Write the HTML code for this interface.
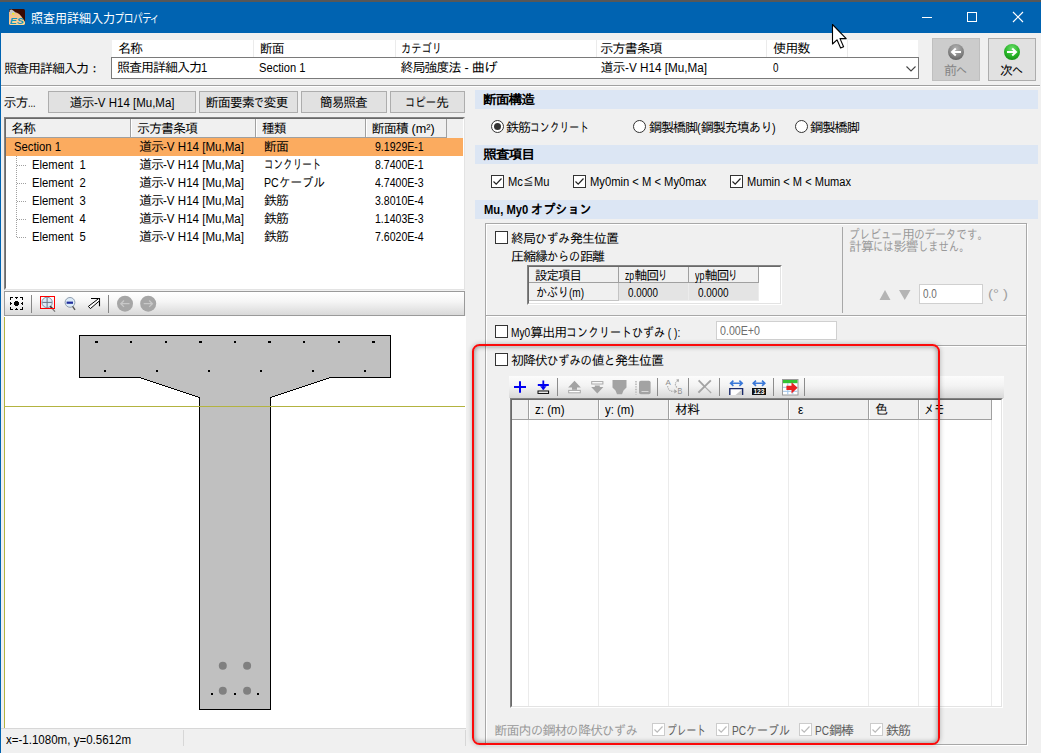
<!DOCTYPE html>
<html lang="ja"><head><meta charset="utf-8"><title>照査用詳細入力プロパティ</title>
<style>
*{box-sizing:border-box;margin:0;padding:0}
html,body{width:1041px;height:753px;overflow:hidden;background:#f0f0f0}
body{position:relative;font:12px/14px "Liberation Sans","IPAGothic",sans-serif;color:#000}
.a{position:absolute}
.t{position:absolute;white-space:pre;height:14px;line-height:14px}
.s{display:inline-block;transform-origin:0 50%}
.k{font-size:13px;letter-spacing:-1px}
.h{font-size:13px}
.btn{position:absolute;background:#e1e1e1;border:1px solid #adadad}
.band{position:absolute;left:475px;width:563px;height:19px;background:#dce6f4}
.cb{position:absolute;width:13px;height:13px;background:#fff;border:1px solid #333}
.cb.d{border-color:#ccc;background:#fff}
.rd{position:absolute;width:13px;height:13px;background:#fff;border:1px solid #333;border-radius:50%}
.vs{position:absolute;width:1px;background:#ebebeb}
</style></head><body>
<!-- window chrome -->
<div class="a" style="left:0;top:0;width:1041px;height:2px;background:#575757"></div>
<div class="a" style="left:0;top:2px;width:1041px;height:31px;background:#0063b1"></div>
<div class="a" style="left:0;top:33px;width:1px;height:720px;background:#0063b1"></div>
<svg class="a" style="left:9px;top:9px" width="16" height="16" viewBox="0 0 16 16"><defs><linearGradient id="ig" x1="0" y1="0" x2="0" y2="1"><stop offset="0" stop-color="#f0b888"/><stop offset="1" stop-color="#ffd898"/></linearGradient><clipPath id="ic"><rect width="16" height="16" rx="1.6"/></clipPath></defs><g clip-path="url(#ic)"><rect width="16" height="16" fill="#3a0a02"/><path d="M0 3 Q8 2 12 7 Q14.5 10 16 13 V16 H0Z" fill="url(#ig)"/><path d="M0.5 1.5 Q2 0 3.5 1 Q6.5 2.5 6.5 4.5 Q5 5.8 2.5 5.6 Q0.5 5 0.5 1.5Z" fill="#c4c4c8"/><ellipse cx="4.2" cy="4.7" rx="1.3" ry="0.9" fill="#f4ec10"/><text x="0.8" y="14.6" font-family="Liberation Sans,sans-serif" font-size="9.6" font-weight="bold" font-style="italic" fill="#1496c0" textLength="14" lengthAdjust="spacingAndGlyphs">ES</text></g></svg>
<svg class="a" style="left:915px;top:5px" width="120" height="25" viewBox="915 5 120 25"><path d="M922 17.5 H932" stroke="#fff" stroke-width="1"/><rect x="967.5" y="12.5" width="9" height="9" fill="none" stroke="#fff" stroke-width="1"/><path d="M1013 12 L1023 22 M1023 12 L1013 22" stroke="#fff" stroke-width="1.2"/></svg>

<!-- top row -->
<div class="a" style="left:112px;top:40px;width:806px;height:17px;background:#fff"></div>
<div class="vs" style="left:253px;top:40px;height:17px"></div>
<div class="vs" style="left:395px;top:40px;height:17px"></div>
<div class="vs" style="left:596px;top:40px;height:17px"></div>
<div class="vs" style="left:766px;top:40px;height:17px"></div>
<div class="vs" style="left:847px;top:40px;height:17px"></div>
<div class="a" style="left:111px;top:57px;width:808px;height:22px;background:#fff;border:1px solid #7a7a7a"></div>
<svg class="a" style="left:905px;top:65px" width="12" height="8" viewBox="0 0 12 8"><path d="M1.5 1.5 L6 6 L10.5 1.5" fill="none" stroke="#444" stroke-width="1.1"/></svg>
<div class="btn" style="left:932px;top:38px;width:48px;height:43px;background:#ccc;border-color:#bfbfbf"></div>
<div class="btn" style="left:988px;top:38px;width:48px;height:43px"></div>
<svg class="a" style="left:947px;top:43px" width="75" height="18" viewBox="947 43 75 18">
<defs>
<radialGradient id="gg" cx=".5" cy=".3" r=".75"><stop offset="0" stop-color="#b4b4b4"/><stop offset=".6" stop-color="#868686"/><stop offset="1" stop-color="#5c5c5c"/></radialGradient>
<radialGradient id="gn" cx=".5" cy=".3" r=".75"><stop offset="0" stop-color="#6fe06f"/><stop offset=".6" stop-color="#27b427"/><stop offset="1" stop-color="#128a12"/></radialGradient>
</defs>
<circle cx="956" cy="52" r="8" fill="url(#gg)"/>
<path d="M961 52 H952.6 M955.8 48.4 L952 52 L955.8 55.6" fill="none" stroke="#fff" stroke-width="2" stroke-linejoin="miter"/>
<circle cx="1012" cy="52" r="8" fill="url(#gn)"/>
<path d="M1007 52 H1015.4 M1012.2 48.4 L1016 52 L1012.2 55.6" fill="none" stroke="#fff" stroke-width="2" stroke-linejoin="miter"/>
</svg>

<div class="a" style="left:1px;top:85px;width:1039px;height:1px;background:#a0a0a0"></div>
<div class="a" style="left:1px;top:86px;width:1039px;height:1px;background:#fff"></div>
<!-- left buttons -->
<div class="btn" style="left:48px;top:91px;width:148px;height:22px"></div>
<div class="btn" style="left:199px;top:91px;width:99px;height:22px"></div>
<div class="btn" style="left:301px;top:91px;width:86px;height:22px"></div>
<div class="btn" style="left:390px;top:91px;width:75px;height:22px"></div>
<!-- list -->
<div class="a" style="left:4px;top:117px;width:461px;height:173px;background:#fff;border:1px solid #828282;border-right-color:#e3e3e3;border-bottom-color:#e3e3e3"></div>
<div class="a" style="left:5px;top:118px;width:459px;height:171px;border:1px solid #696969;border-right-color:#fff;border-bottom-color:#fff"></div>
<div class="a" style="left:6px;top:119px;width:457px;height:19px;background:#f0f0f0"></div>
<div class="a" style="left:6px;top:119px;width:441px;height:19px;background:#f0f0f0;border-bottom:1px solid #a0a0a0;border-right:1px solid #a0a0a0"></div>
<div class="a" style="left:130px;top:119px;width:1px;height:18px;background:#a0a0a0"></div>
<div class="a" style="left:255px;top:119px;width:1px;height:18px;background:#a0a0a0"></div>
<div class="a" style="left:365px;top:119px;width:1px;height:18px;background:#a0a0a0"></div>
<div class="a" style="left:131px;top:119px;width:1px;height:18px;background:#fff"></div>
<div class="a" style="left:256px;top:119px;width:1px;height:18px;background:#fff"></div>
<div class="a" style="left:366px;top:119px;width:1px;height:18px;background:#fff"></div>
<div class="a" style="left:6px;top:138px;width:457px;height:18px;background:#fbab5f"></div>
<svg class="a" style="left:14px;top:156px" width="16" height="90" viewBox="14 156 16 90" shape-rendering="crispEdges">
<path d="M16.5 156 V238" stroke="#a0a0a0" stroke-width="1" stroke-dasharray="1 1"/>
<path d="M17 165.5 H27 M17 183.5 H27 M17 201.5 H27 M17 219.5 H27 M17 237.5 H27" stroke="#a0a0a0" stroke-width="1" stroke-dasharray="1 1"/>
</svg>

<!-- view toolbar + canvas -->
<div class="a" style="left:4px;top:291px;width:461px;height:25px;background:linear-gradient(#fff 0%,#f6f6f6 40%,#d9d9d9 100%);border:1px solid #9a9a9a"></div>
<svg class="a" style="left:5px;top:292px" width="160" height="23" viewBox="5 292 160 23">
<path d="M10 297h1v1h-1zM10 298h1v1h-1zM10 299h1v1h-1zM10 302h1v1h-1zM10 303h1v1h-1zM10 304h1v1h-1zM10 307h1v1h-1zM10 308h1v1h-1zM10 309h1v1h-1zM11 297h1v1h-1zM11 303h1v1h-1zM11 309h1v1h-1zM12 297h1v1h-1zM12 309h1v1h-1zM14 302h1v1h-1zM14 303h1v1h-1zM14 304h1v1h-1zM15 297h1v1h-1zM15 301h1v1h-1zM15 302h1v1h-1zM15 303h1v1h-1zM15 304h1v1h-1zM15 305h1v1h-1zM15 309h1v1h-1zM16 297h1v1h-1zM16 298h1v1h-1zM16 301h1v1h-1zM16 302h1v1h-1zM16 303h1v1h-1zM16 304h1v1h-1zM16 305h1v1h-1zM16 308h1v1h-1zM16 309h1v1h-1zM17 297h1v1h-1zM17 301h1v1h-1zM17 302h1v1h-1zM17 303h1v1h-1zM17 304h1v1h-1zM17 305h1v1h-1zM17 309h1v1h-1zM18 302h1v1h-1zM18 303h1v1h-1zM18 304h1v1h-1zM20 297h1v1h-1zM20 309h1v1h-1zM21 297h1v1h-1zM21 303h1v1h-1zM21 309h1v1h-1zM22 297h1v1h-1zM22 298h1v1h-1zM22 299h1v1h-1zM22 302h1v1h-1zM22 303h1v1h-1zM22 304h1v1h-1zM22 307h1v1h-1zM22 308h1v1h-1zM22 309h1v1h-1z" fill="#000" shape-rendering="crispEdges"/>
<rect x="31" y="295" width="1" height="18" fill="#868686"/>
<rect x="108" y="295" width="1" height="18" fill="#868686"/>
<circle cx="47.1" cy="302.4" r="5.2" fill="#dcecf8" stroke="#8795a6" stroke-width="1"/>
<path d="M47.1 297.6 V307.2 M42.3 302.4 H51.9" stroke="#6a7482" stroke-width="1"/>
<path d="M50.2 306.2 L52.4 308.6" stroke="#333" stroke-width="1.6"/><path d="M52.4 308.6 L55 311.6" stroke="#777" stroke-width="1.3"/>
<rect x="40.5" y="296.5" width="14" height="12" fill="none" stroke="#f00" stroke-width="1"/>
<circle cx="70" cy="302.4" r="4.9" fill="#dcecf8" stroke="#8f9cae" stroke-width="1"/>
<rect x="66.6" y="301.6" width="6.4" height="2.2" fill="#202c9c"/>
<path d="M72.6 306.4 L75 309.8" stroke="#555" stroke-width="1.4"/>
<path d="M91 298.5 H99.5 V306.3" fill="none" stroke="#000" stroke-width="1.1"/>
<path d="M98.6 298.6 L88.4 306.4 L90.4 308.6 L99.3 301" fill="#fff" stroke="#000" stroke-width="1" stroke-linejoin="miter"/>
<circle cx="125" cy="303.7" r="8" fill="#a6a6a6"/>
<path d="M129.5 303.7 H120.8 M124 300.5 L120.8 303.7 L124 306.9" fill="none" stroke="#c8c8c8" stroke-width="1.3"/>
<circle cx="148.2" cy="303.7" r="8" fill="#a6a6a6"/>
<path d="M143.7 303.7 H152.4 M149.2 300.5 L152.4 303.7 L149.2 306.9" fill="none" stroke="#c8c8c8" stroke-width="1.3"/>
</svg>

<div class="a" style="left:4px;top:316px;width:462px;height:412px;background:#fff"></div>
<div class="a" style="left:4px;top:317px;width:1px;height:411px;background:#b3b340"></div>
<svg class="a" style="left:5px;top:316px" width="461" height="412" viewBox="5 316 461 412" shape-rendering="crispEdges">
<path d="M79.5 335.5 H390.5 V377.5 H330.5 L270.5 397.5 V709.5 H199.5 V397.5 L139.5 377.5 H79.5 Z" fill="#c0c0c0" stroke="#000" stroke-width="1"/>
<g fill="#000">
<rect x="95" y="341" width="3" height="2"/><rect x="130" y="341" width="2" height="2"/><rect x="165" y="341" width="2" height="2"/><rect x="199" y="341" width="3" height="2"/><rect x="234" y="341" width="2" height="2"/><rect x="268" y="341" width="3" height="2"/><rect x="303" y="341" width="2" height="2"/><rect x="338" y="341" width="2" height="2"/><rect x="372" y="341" width="3" height="2"/>
<rect x="104" y="370" width="2" height="2"/><rect x="156" y="370" width="2" height="2"/><rect x="208" y="370" width="2" height="2"/><rect x="260" y="370" width="2" height="2"/><rect x="312" y="370" width="2" height="2"/><rect x="364" y="370" width="2" height="2"/>
<rect x="211" y="693" width="2" height="2"/><rect x="234" y="693" width="2" height="2"/><rect x="257" y="693" width="2" height="2"/>
</g>
<g fill="#808080" shape-rendering="geometricPrecision"><circle cx="222.8" cy="665.8" r="4"/><circle cx="247.1" cy="665.8" r="4"/><circle cx="222.8" cy="690.7" r="4"/><circle cx="247.1" cy="690.7" r="4"/></g>
<rect x="5" y="406" width="460" height="1" fill="#b3b340"/>
</svg>

<!-- status -->
<div class="a" style="left:1px;top:728px;width:465px;height:1px;background:#d7d7d7"></div>
<div class="a" style="left:183px;top:730px;width:1px;height:16px;background:#d7d7d7"></div>
<div class="a" style="left:465px;top:730px;width:1px;height:16px;background:#d7d7d7"></div>
<!-- right panel -->
<div class="band" style="top:90px"></div>
<div class="band" style="top:145px"></div>
<div class="band" style="top:200px"></div>
<!-- radios -->
<div class="rd" style="left:491px;top:120px"></div><div class="a" style="left:494px;top:123px;width:7px;height:7px;border-radius:50%;background:#333"></div>
<div class="rd" style="left:633px;top:120px"></div>
<div class="rd" style="left:795px;top:120px"></div>
<!-- checkboxes row -->
<div class="cb" style="left:491px;top:175px"></div><svg class="a" style="left:491px;top:175px" width="13" height="13"><path d="M2.5 6.5 L5.2 9.2 L10.5 3.5" fill="none" stroke="#222" stroke-width="1.2"/></svg>
<div class="cb" style="left:573px;top:175px"></div><svg class="a" style="left:573px;top:175px" width="13" height="13"><path d="M2.5 6.5 L5.2 9.2 L10.5 3.5" fill="none" stroke="#222" stroke-width="1.2"/></svg>
<div class="cb" style="left:730px;top:175px"></div><svg class="a" style="left:730px;top:175px" width="13" height="13"><path d="M2.5 6.5 L5.2 9.2 L10.5 3.5" fill="none" stroke="#222" stroke-width="1.2"/></svg>
<!-- group box -->
<div class="a" style="left:485px;top:223px;width:542px;height:522px;border:1px solid #a8a8a8;box-shadow:inset 1px 1px 0 #fff, 1px 1px 0 #fff"></div>
<div class="a" style="left:486px;top:315px;width:540px;height:2px;background:#fff;border-top:1px solid #a8a8a8"></div>
<div class="a" style="left:486px;top:345px;width:540px;height:2px;background:#fff;border-top:1px solid #a8a8a8"></div>
<div class="a" style="left:842px;top:227px;width:1px;height:86px;background:#a8a8a8"></div>
<div class="cb" style="left:495px;top:231px"></div>
<div class="cb" style="left:495px;top:325px"></div>
<div class="cb" style="left:495px;top:353px"></div>
<!-- small table -->
<div class="a" style="left:527px;top:265px;width:255px;height:40px;background:#fff;border:1px solid #828282;border-right-color:#fff;border-bottom-color:#fff"></div>
<div class="a" style="left:528px;top:266px;width:253px;height:38px;border:1px solid #696969;border-right-color:#e3e3e3;border-bottom-color:#e3e3e3"></div>
<div class="a" style="left:529px;top:267px;width:230px;height:16px;background:#f0f0f0;border-bottom:1px solid #a0a0a0;border-right:1px solid #a0a0a0"></div>
<div class="a" style="left:618px;top:267px;width:1px;height:15px;background:#a0a0a0"></div>
<div class="a" style="left:688px;top:267px;width:1px;height:15px;background:#a0a0a0"></div>
<div class="a" style="left:529px;top:283px;width:90px;height:18px;background:#f0f0f0;border-bottom:1px solid #c4c4c4;border-right:1px solid #c4c4c4"></div>
<div class="a" style="left:619px;top:283px;width:70px;height:18px;background:#e4e4e4;border-bottom:1px solid #ececec;border-right:1px solid #ececec"></div>
<div class="a" style="left:689px;top:283px;width:70px;height:18px;background:#e4e4e4;border-bottom:1px solid #ececec;border-right:1px solid #ececec"></div>
<!-- preview controls -->
<svg class="a" style="left:879px;top:289px" width="34" height="12"><path d="M0.5 11 L6 1 L11.5 11Z M20 1 L31.5 1 L25.75 11Z" fill="#b4b4b4"/></svg>
<div class="a" style="left:919px;top:284px;width:64px;height:20px;background:#fff;border:1px solid #d0d0d0"></div>
<div class="a" style="left:716px;top:321px;width:121px;height:19px;background:#fff;border:1px solid #d0d0d0"></div>
<!-- grid toolbar -->
<div class="a" style="left:509px;top:376px;width:495px;height:22px;background:linear-gradient(#fcfcfc 0%,#f3f3f3 45%,#d8d8d8 100%)"></div>
<svg class="a" style="left:509px;top:376px" width="300" height="22" viewBox="509 376 300 22">
<path d="M520 381.2 V392.8 M514 387 H526" stroke="#0000f0" stroke-width="2"/>
<path d="M543.3 380.5 V389.5 M537.8 385 H548.8" stroke="#0000f0" stroke-width="1.8"/>
<path d="M540 386.3 H546.6 L543.3 390 Z" fill="#0000f0"/>
<rect x="538" y="391" width="10.6" height="2.4" fill="#fff" stroke="#000" stroke-width="1"/>
<g fill="#8c8c8c">
<rect x="557" y="378" width="1" height="18"/><rect x="657" y="378" width="1" height="18"/><rect x="688" y="378" width="1" height="18"/><rect x="719" y="378" width="1" height="18"/><rect x="773" y="378" width="1" height="18"/><rect x="804" y="378" width="1" height="18"/>
</g>
<g fill="#a3a3a3">
<path d="M574.5 380.8 L580.8 387.5 H577 V389.8 H572 V387.5 H568.2 Z"/>
<path d="M597.3 393.4 L603.4 387 H599.8 V385.4 H594.8 V387 H591.2 Z"/>
<path d="M612.5 380 H626.5 V387.5 L625 389 L623.5 390.5 L622 394.3 H617 L615.5 390.5 L614 389 L612.5 387.5 Z"/>
<rect x="639" y="380.8" width="11.6" height="13.4" rx="1.8"/>
</g>
<rect x="568.7" y="390.4" width="11.6" height="2.4" fill="#fff" stroke="#a8a8a8" stroke-width="1"/>
<rect x="591.7" y="381.6" width="11.2" height="2.4" fill="#fff" stroke="#a8a8a8" stroke-width="1"/>
<path d="M636 381 V394.5" stroke="#a3a3a3" stroke-width="1.2" stroke-dasharray="1.4 1.2"/>
<path d="M641.5 391.5 H648.5" stroke="#d8d8d8" stroke-width="1"/>
<g fill="none" stroke="#a2a2a2" stroke-width="1.2">
<path d="M667.6 386.2 Q668.2 391.6 674 391.4" stroke-dasharray="1.1 1.1"/>
<path d="M676.8 387.4 Q673.6 384 677.6 380.6" stroke-dasharray="1.1 1.1"/>
</g>
<path d="M674.3 389.2 L677.2 391.4 L674.3 393.5 Z M676.2 379.6 L679 379.3 L678.6 382.2Z" fill="#a2a2a2"/>
<text x="665.4" y="385" font-family="Liberation Sans,sans-serif" font-size="8" fill="#8e8e8e">A</text>
<text x="677.6" y="393.7" font-family="Liberation Sans,sans-serif" font-size="8.6" fill="#8e8e8e" textLength="4.8" lengthAdjust="spacingAndGlyphs">B</text>
<path d="M698.4 392.6 L710.8 380.4" stroke="#a3a3a3" stroke-width="2"/><path d="M698.6 380.4 L705 386.8" stroke="#a3a3a3" stroke-width="1.8"/><path d="M705 386.8 L711.2 393" stroke="#a9a9a9" stroke-width="1.2"/>
<g stroke="#3a78d8" stroke-width="1.6" fill="none">
<path d="M730.5 383.2 H742.2 M733.4 380.6 L730.6 383.2 L733.4 385.8 M739.4 380.6 L742.2 383.2 L739.4 385.8"/>
<path d="M753 383.2 H764.8 M756 380.6 L753.2 383.2 L756 385.8 M762 380.6 L764.8 383.2 L762 385.8"/>
</g>
<path d="M729.8 395 V388.6 H742.6 V395" fill="#fff" stroke="#1a2a6a" stroke-width="1.4"/>
<path d="M742 389.5 V395 H735.5 Z" fill="#c8c8c8"/>
<rect x="752" y="388" width="14" height="7" fill="#111"/>
<text x="753.4" y="394.3" font-family="Liberation Sans,sans-serif" font-size="6.8" font-weight="bold" fill="#fff" textLength="11.2" lengthAdjust="spacingAndGlyphs">123</text>
<rect x="782.5" y="379.5" width="15.5" height="15.5" fill="#fff" stroke="#9a9a9a" stroke-width="1"/>
<rect x="783" y="380" width="14.5" height="3.2" fill="#34c234"/>
<path d="M783 387.3 H797.5 M783 391.3 H797.5 M787.8 383 V394.5 M792.8 383 V394.5" stroke="#9fc4e8" stroke-width="1"/>
<path d="M786.4 385.8 H791.5 V382.2 L797.6 387.8 L791.5 393.6 V390 H786.4 Z" fill="#e82020"/>
</svg>

<!-- grid -->
<div class="a" style="left:510px;top:398px;width:493px;height:310px;background:#fff;border:1px solid #828282;border-right-color:#fff;border-bottom-color:#fff"></div>
<div class="a" style="left:511px;top:399px;width:491px;height:308px;border:1px solid #696969;border-right-color:#e3e3e3;border-bottom-color:#e3e3e3"></div>
<div class="a" style="left:512px;top:400px;width:480px;height:20px;background:#f0f0f0;border-bottom:1px solid #a0a0a0;border-right:1px solid #a0a0a0"></div>
<div class="a" style="left:528px;top:400px;width:1px;height:19px;background:#a0a0a0"></div><div class="a" style="left:529px;top:400px;width:1px;height:19px;background:#fff"></div>
<div class="a" style="left:598px;top:400px;width:1px;height:19px;background:#a0a0a0"></div><div class="a" style="left:599px;top:400px;width:1px;height:19px;background:#fff"></div>
<div class="a" style="left:668px;top:400px;width:1px;height:19px;background:#a0a0a0"></div><div class="a" style="left:669px;top:400px;width:1px;height:19px;background:#fff"></div>
<div class="a" style="left:788px;top:400px;width:1px;height:19px;background:#a0a0a0"></div><div class="a" style="left:789px;top:400px;width:1px;height:19px;background:#fff"></div>
<div class="a" style="left:868px;top:400px;width:1px;height:19px;background:#a0a0a0"></div><div class="a" style="left:869px;top:400px;width:1px;height:19px;background:#fff"></div>
<div class="a" style="left:918px;top:400px;width:1px;height:19px;background:#a0a0a0"></div><div class="a" style="left:919px;top:400px;width:1px;height:19px;background:#fff"></div>
<div class="vs" style="left:528px;top:420px;height:286px"></div>
<div class="vs" style="left:598px;top:420px;height:286px"></div>
<div class="vs" style="left:668px;top:420px;height:286px"></div>
<div class="vs" style="left:788px;top:420px;height:286px"></div>
<div class="vs" style="left:868px;top:420px;height:286px"></div>
<div class="vs" style="left:918px;top:420px;height:286px"></div>
<div class="vs" style="left:991px;top:420px;height:286px"></div>
<!-- bottom disabled checkboxes -->
<div class="cb d" style="left:652px;top:723px"></div><svg class="a" style="left:652px;top:723px" width="13" height="13"><path d="M2.5 6.5 L5.2 9.2 L10.5 3.5" fill="none" stroke="#bbb" stroke-width="1.2"/></svg>
<div class="cb d" style="left:716px;top:723px"></div><svg class="a" style="left:716px;top:723px" width="13" height="13"><path d="M2.5 6.5 L5.2 9.2 L10.5 3.5" fill="none" stroke="#bbb" stroke-width="1.2"/></svg>
<div class="cb d" style="left:799px;top:723px"></div><svg class="a" style="left:799px;top:723px" width="13" height="13"><path d="M2.5 6.5 L5.2 9.2 L10.5 3.5" fill="none" stroke="#bbb" stroke-width="1.2"/></svg>
<div class="cb d" style="left:870px;top:723px"></div><svg class="a" style="left:870px;top:723px" width="13" height="13"><path d="M2.5 6.5 L5.2 9.2 L10.5 3.5" fill="none" stroke="#bbb" stroke-width="1.2"/></svg>

<span class="t" aria-label="照査用詳細入力プロパティ" style="left:31px;top:11.5px;color:#fff;font-family:'Liberation Sans','Noto Sans CJK JP',sans-serif;font-feature-settings:'palt';"><span class="l">照査用詳細入力</span><span class="s l" style="transform:scaleX(0.803);margin-right:-10.52px">プロパティ</span></span>
<span class="t" aria-label="照査用詳細入力：" style="left:4px;top:61.5px;"><span class="k">照査用詳細入力</span><span class="s h">：</span></span>
<span class="t" aria-label="名称" style="left:118px;top:42px;"><span class="s k">名称</span></span>
<span class="t" aria-label="断面" style="left:259.5px;top:42px;"><span class="s k" style="transform:scaleX(0.979);margin-right:-0.50px">断面</span></span>
<span class="t" aria-label="カテゴリ" style="left:401px;top:42px;"><span class="s h" style="transform:scaleX(0.788);margin-right:-11.00px">カテゴリ</span></span>
<span class="t" aria-label="示方書条項" style="left:600px;top:42px;"><span class="s k" style="transform:scaleX(1.025);margin-right:1.50px">示方書条項</span></span>
<span class="t" aria-label="使用数" style="left:772.5px;top:42px;"><span class="s k" style="transform:scaleX(1.014);margin-right:0.50px">使用数</span></span>
<span class="t" aria-label="照査用詳細入力1" style="left:117px;top:61px;"><span class="k">照査用詳細入力</span><span class="s l" style="transform:scaleX(0.942);margin-right:-0.39px">1</span></span>
<span class="t" aria-label="Section 1" style="left:259px;top:61px;"><span class="s l" style="transform:scaleX(0.929);margin-right:-3.55px">Section 1</span></span>
<span class="t" aria-label="終局強度法 - 曲げ" style="left:400.5px;top:61px;"><span class="k">終局強度法</span><span class="s l" style="transform:scaleX(1.056);margin-right:0.60px"> - </span><span class="k">曲</span><span class="s h" style="transform:scaleX(1.056);margin-right:0.73px">げ</span></span>
<span class="t" aria-label="道示-V H14 [Mu,Ma]" style="left:600.5px;top:61px;"><span class="k">道示</span><span class="s l" style="transform:scaleX(0.976);margin-right:-2.03px">-V H14 [Mu,Ma]</span></span>
<span class="t" aria-label="0" style="left:772.5px;top:61px;"><span class="s l" style="transform:scaleX(0.822);margin-right:-1.19px">0</span></span>
<span class="t" aria-label="前へ" style="left:944px;top:63.5px;color:#838383;"><span class="k">前</span><span class="s h" style="transform:scaleX(0.846);margin-right:-2.00px">へ</span></span>
<span class="t" aria-label="次へ" style="left:1000px;top:63.5px;"><span class="k">次</span><span class="s h" style="transform:scaleX(0.846);margin-right:-2.00px">へ</span></span>
<span class="t" aria-label="示方..." style="left:3.5px;top:95.5px;"><span class="k">示方</span><span class="s l" style="transform:scaleX(0.749);margin-right:-2.52px">...</span></span>
<span class="t" aria-label="道示-V H14 [Mu,Ma]" style="left:69.5px;top:95.5px;"><span class="k">道示</span><span class="s l" style="transform:scaleX(0.958);margin-right:-3.53px">-V H14 [Mu,Ma]</span></span>
<span class="t" aria-label="断面要素で変更" style="left:205.75px;top:95.5px;"><span class="k">断面要素</span><span class="s h" style="transform:scaleX(0.750);margin-right:-3.25px">で</span><span class="k">変更</span></span>
<span class="t" aria-label="簡易照査" style="left:319.5px;top:95.5px;"><span class="s k" style="transform:scaleX(0.969);margin-right:-1.50px">簡易照査</span></span>
<span class="t" aria-label="コピー先" style="left:405px;top:95.5px;"><span class="s h" style="transform:scaleX(0.795);margin-right:-8.00px">コピー</span><span class="k">先</span></span>
<span class="t" aria-label="名称" style="left:11px;top:121.5px;"><span class="s k">名称</span></span>
<span class="t" aria-label="示方書条項" style="left:137px;top:121.5px;"><span class="s k">示方書条項</span></span>
<span class="t" aria-label="種類" style="left:262px;top:121.5px;"><span class="s k" style="transform:scaleX(0.979);margin-right:-0.50px">種類</span></span>
<span class="t" aria-label="断面積 (m²)" style="left:371.75px;top:121.5px;"><span class="k">断面積</span><span class="s l" style="transform:scaleX(1.056);margin-right:1.42px"> (m²)</span></span>
<span class="t" aria-label="Section 1" style="left:13.75px;top:140px;"><span class="s l" style="transform:scaleX(0.940);margin-right:-3.00px">Section 1</span></span>
<span class="t" aria-label="道示-V H14 [Mu,Ma]" style="left:139px;top:140px;"><span class="k">道示</span><span class="s l" style="transform:scaleX(0.964);margin-right:-3.03px">-V H14 [Mu,Ma]</span></span>
<span class="t" aria-label="断面" style="left:263.75px;top:140px;"><span class="s k" style="transform:scaleX(0.990);margin-right:-0.25px">断面</span></span>
<span class="t" aria-label="9.1929E-1" style="left:375px;top:140px;"><span class="s l" style="transform:scaleX(0.880);margin-right:-6.64px">9.1929E-1</span></span>
<span class="t" aria-label="Element  1" style="left:32.3px;top:158px;"><span class="s l" style="transform:scaleX(0.939);margin-right:-3.47px">Element  1</span></span>
<span class="t" aria-label="道示-V H14 [Mu,Ma]" style="left:139px;top:158px;"><span class="k">道示</span><span class="s l" style="transform:scaleX(0.964);margin-right:-3.03px">-V H14 [Mu,Ma]</span></span>
<span class="t" aria-label="コンクリート" style="left:263.75px;top:158px;"><span class="s h" style="transform:scaleX(0.734);margin-right:-20.75px">コンクリート</span></span>
<span class="t" aria-label="8.7400E-1" style="left:375px;top:158px;"><span class="s l" style="transform:scaleX(0.880);margin-right:-6.64px">8.7400E-1</span></span>
<span class="t" aria-label="Element  2" style="left:32.3px;top:176px;"><span class="s l" style="transform:scaleX(0.939);margin-right:-3.47px">Element  2</span></span>
<span class="t" aria-label="道示-V H14 [Mu,Ma]" style="left:139px;top:176px;"><span class="k">道示</span><span class="s l" style="transform:scaleX(0.964);margin-right:-3.03px">-V H14 [Mu,Ma]</span></span>
<span class="t" aria-label="PCケーブル" style="left:263.75px;top:176px;"><span class="s l" style="transform:scaleX(0.886);margin-right:-1.90px">PC</span><span class="s h" style="transform:scaleX(0.886);margin-right:-5.92px">ケーブル</span></span>
<span class="t" aria-label="4.7400E-3" style="left:375px;top:176px;"><span class="s l" style="transform:scaleX(0.880);margin-right:-6.64px">4.7400E-3</span></span>
<span class="t" aria-label="Element  3" style="left:32.3px;top:194px;"><span class="s l" style="transform:scaleX(0.939);margin-right:-3.47px">Element  3</span></span>
<span class="t" aria-label="道示-V H14 [Mu,Ma]" style="left:139px;top:194px;"><span class="k">道示</span><span class="s l" style="transform:scaleX(0.964);margin-right:-3.03px">-V H14 [Mu,Ma]</span></span>
<span class="t" aria-label="鉄筋" style="left:263.75px;top:194px;"><span class="s k" style="transform:scaleX(0.990);margin-right:-0.25px">鉄筋</span></span>
<span class="t" aria-label="3.8010E-4" style="left:375px;top:194px;"><span class="s l" style="transform:scaleX(0.880);margin-right:-6.64px">3.8010E-4</span></span>
<span class="t" aria-label="Element  4" style="left:32.3px;top:212px;"><span class="s l" style="transform:scaleX(0.939);margin-right:-3.47px">Element  4</span></span>
<span class="t" aria-label="道示-V H14 [Mu,Ma]" style="left:139px;top:212px;"><span class="k">道示</span><span class="s l" style="transform:scaleX(0.964);margin-right:-3.03px">-V H14 [Mu,Ma]</span></span>
<span class="t" aria-label="鉄筋" style="left:263.75px;top:212px;"><span class="s k" style="transform:scaleX(0.990);margin-right:-0.25px">鉄筋</span></span>
<span class="t" aria-label="1.1403E-3" style="left:375px;top:212px;"><span class="s l" style="transform:scaleX(0.880);margin-right:-6.64px">1.1403E-3</span></span>
<span class="t" aria-label="Element  5" style="left:32.3px;top:230px;"><span class="s l" style="transform:scaleX(0.939);margin-right:-3.47px">Element  5</span></span>
<span class="t" aria-label="道示-V H14 [Mu,Ma]" style="left:139px;top:230px;"><span class="k">道示</span><span class="s l" style="transform:scaleX(0.964);margin-right:-3.03px">-V H14 [Mu,Ma]</span></span>
<span class="t" aria-label="鉄筋" style="left:263.75px;top:230px;"><span class="s k" style="transform:scaleX(0.990);margin-right:-0.25px">鉄筋</span></span>
<span class="t" aria-label="7.6020E-4" style="left:375px;top:230px;"><span class="s l" style="transform:scaleX(0.880);margin-right:-6.64px">7.6020E-4</span></span>
<span class="t" aria-label="断面構造" style="left:483px;top:93px;font-weight:bold;"><span class="s k" style="transform:scaleX(1.062);margin-right:3.00px">断面構造</span></span>
<span class="t" aria-label="照査項目" style="left:483px;top:148px;font-weight:bold;"><span class="s k" style="transform:scaleX(1.062);margin-right:3.00px">照査項目</span></span>
<span class="t" aria-label="Mu, My0 オプション" style="left:484px;top:203px;font-weight:bold;"><span class="s l" style="transform:scaleX(0.934);margin-right:-3.36px">Mu, My0 </span><span class="s h" style="transform:scaleX(0.934);margin-right:-4.31px">オプション</span></span>
<span class="t" aria-label="鉄筋コンクリート" style="left:506px;top:120.5px;"><span class="k">鉄筋</span><span class="s h" style="transform:scaleX(0.756);margin-right:-19.00px">コンクリート</span></span>
<span class="t" aria-label="鋼製橋脚(鋼製充填あり)" style="left:649px;top:120.5px;"><span class="k">鋼製橋脚</span><span class="s l" style="transform:scaleX(0.912);margin-right:-0.35px">(</span><span class="k">鋼製充填</span><span class="s h" style="transform:scaleX(0.912);margin-right:-2.29px">あり</span><span class="s l" style="transform:scaleX(0.912);margin-right:-0.35px">)</span></span>
<span class="t" aria-label="鋼製橋脚" style="left:810px;top:120.5px;"><span class="s k" style="transform:scaleX(1.021);margin-right:1.00px">鋼製橋脚</span></span>
<span class="t" aria-label="Mc≦Mu" style="left:507.5px;top:175px;"><span class="s l" style="transform:scaleX(0.929);margin-right:-3.17px">Mc≦Mu</span></span>
<span class="t" aria-label="My0min &lt; M &lt; My0max" style="left:589.5px;top:175px;"><span class="s l" style="transform:scaleX(0.934);margin-right:-8.20px">My0min &lt; M &lt; My0max</span></span>
<span class="t" aria-label="Mumin &lt; M &lt; Mumax" style="left:747px;top:175px;"><span class="s l" style="transform:scaleX(0.923);margin-right:-8.70px">Mumin &lt; M &lt; Mumax</span></span>
<span class="t" aria-label="終局ひずみ発生位置" style="left:511px;top:231.5px;"><span class="k">終局</span><span class="s h" style="transform:scaleX(0.897);margin-right:-4.00px">ひずみ</span><span class="k">発生位置</span></span>
<span class="t" aria-label="圧縮縁からの距離" style="left:511px;top:250px;"><span class="k">圧縮縁</span><span class="s h" style="transform:scaleX(0.846);margin-right:-6.00px">からの</span><span class="k">距離</span></span>
<span class="t" aria-label="設定項目" style="left:535px;top:268.5px;"><span class="s k" style="transform:scaleX(0.958);margin-right:-2.00px">設定項目</span></span>
<span class="t" aria-label="zp軸回り" style="left:625px;top:268.5px;"><span class="s l" style="transform:scaleX(0.720);margin-right:-3.55px">zp</span><span class="k">軸回</span><span class="s h" style="transform:scaleX(0.720);margin-right:-3.64px">り</span></span>
<span class="t" aria-label="yp軸回り" style="left:695px;top:268.5px;"><span class="s l" style="transform:scaleX(0.740);margin-right:-3.30px">yp</span><span class="k">軸回</span><span class="s h" style="transform:scaleX(0.740);margin-right:-3.38px">り</span></span>
<span class="t" aria-label="かぶり(m)" style="left:536px;top:285.5px;"><span class="s h" style="transform:scaleX(0.842);margin-right:-6.16px">かぶり</span><span class="s l" style="transform:scaleX(0.842);margin-right:-2.84px">(m)</span></span>
<span class="t" aria-label="0.0000" style="left:628px;top:285.5px;"><span class="s l" style="transform:scaleX(0.817);margin-right:-6.70px">0.0000</span></span>
<span class="t" aria-label="0.0000" style="left:697.5px;top:285.5px;"><span class="s l" style="transform:scaleX(0.831);margin-right:-6.20px">0.0000</span></span>
<span class="t" aria-label="プレビュー用のデータです。" style="left:849px;top:228px;color:#999;"><span class="s h" style="transform:scaleX(0.814);margin-right:-12.08px">プレビュー</span><span class="k">用</span><span class="s h" style="transform:scaleX(0.814);margin-right:-16.92px">のデータです。</span></span>
<span class="t" aria-label="計算には影響しません。" style="left:849px;top:240px;color:#999;"><span class="k">計算</span><span class="s h" style="transform:scaleX(0.791);margin-right:-5.43px">には</span><span class="k">影響</span><span class="s h" style="transform:scaleX(0.791);margin-right:-13.57px">しません。</span></span>
<span class="t" aria-label="0.0" style="left:922.6px;top:287px;color:#6d6d6d;"><span class="s l" style="transform:scaleX(0.827);margin-right:-2.89px">0.0</span></span>
<span class="t" aria-label="(° )" style="left:988px;top:287px;color:#a0a0a0;"><span class="s l" style="transform:scaleX(1.240);margin-right:3.87px">(° )</span></span>
<span class="t" aria-label="My0算出用コンクリートひずみ ( ):" style="left:511px;top:326px;"><span class="s l" style="transform:scaleX(0.847);margin-right:-3.48px">My0</span><span class="k">算出用</span><span class="s h" style="transform:scaleX(0.847);margin-right:-17.94px">コンクリートひずみ</span><span class="s l" style="transform:scaleX(0.847);margin-right:-2.76px"> ( ):</span></span>
<span class="t" aria-label="0.00E+0" style="left:720px;top:324px;color:#6d6d6d;"><span class="s l" style="transform:scaleX(0.888);margin-right:-5.05px">0.00E+0</span></span>
<span class="t" aria-label="初降伏ひずみの値と発生位置" style="left:511px;top:354px;"><span class="k">初降伏</span><span class="s h" style="transform:scaleX(0.862);margin-right:-7.20px">ひずみの</span><span class="k">値</span><span class="s h" style="transform:scaleX(0.862);margin-right:-1.80px">と</span><span class="k">発生位置</span></span>
<span class="t" aria-label="z: (m)" style="left:534.5px;top:403px;"><span class="s l" style="transform:scaleX(0.962);margin-right:-1.16px">z: (m)</span></span>
<span class="t" aria-label="y: (m)" style="left:605px;top:403px;"><span class="s l" style="transform:scaleX(0.946);margin-right:-1.66px">y: (m)</span></span>
<span class="t" aria-label="材料" style="left:675px;top:403px;"><span class="s k">材料</span></span>
<span class="t" aria-label="ε" style="left:797.6px;top:403px;"><span class="s l" style="transform:scaleX(1.008);margin-right:0.04px">ε</span></span>
<span class="t" aria-label="色" style="left:875px;top:403px;"><span class="s k">色</span></span>
<span class="t" aria-label="メモ" style="left:924.4px;top:403px;"><span class="s h" style="transform:scaleX(0.792);margin-right:-5.40px">メモ</span></span>
<span class="t" aria-label="断面内の鋼材の降伏ひずみ" style="left:494.5px;top:723.5px;color:#999;"><span class="k">断面内</span><span class="s h" style="transform:scaleX(0.915);margin-right:-1.10px">の</span><span class="k">鋼材</span><span class="s h" style="transform:scaleX(0.915);margin-right:-1.10px">の</span><span class="k">降伏</span><span class="s h" style="transform:scaleX(0.915);margin-right:-3.30px">ひずみ</span></span>
<span class="t" aria-label="プレート" style="left:667px;top:723.5px;color:#5c5c5c;"><span class="s h" style="transform:scaleX(0.750);margin-right:-13.00px">プレート</span></span>
<span class="t" aria-label="PCケーブル" style="left:732px;top:723.5px;color:#5c5c5c;"><span class="s l" style="transform:scaleX(0.845);margin-right:-2.59px">PC</span><span class="s h" style="transform:scaleX(0.845);margin-right:-8.08px">ケーブル</span></span>
<span class="t" aria-label="PC鋼棒" style="left:815px;top:723.5px;color:#5c5c5c;"><span class="s l" style="transform:scaleX(0.840);margin-right:-2.67px">PC</span><span class="k">鋼棒</span></span>
<span class="t" aria-label="鉄筋" style="left:886px;top:723.5px;color:#5c5c5c;"><span class="s k">鉄筋</span></span>
<span class="t" aria-label="x=-1.1080m, y=0.5612m" style="left:6px;top:732.5px;font-family:'Liberation Sans',sans-serif;"><span class="s l" style="transform:scaleX(0.961);margin-right:-5.08px">x=-1.1080m, y=0.5612m</span></span>
<div class="a" style="left:471.6px;top:343.6px;width:468.2px;height:401px;border:2.25px solid #fb0a0a;border-radius:7.5px;box-shadow:0 0 5px rgba(0,0,0,.26), inset 0 0 5px 0.5px rgba(0,0,0,.42)"></div>
<svg class="a" style="left:831px;top:23px" width="17" height="27" viewBox="0 0 17 27"><path d="M1.5 1.5 V21 L6 16.8 L9.6 25 L12.6 23.7 L9 15.6 H15.2 Z" fill="#fff" stroke="#000" stroke-width="1.1" stroke-linejoin="round"/></svg>

</body></html>
